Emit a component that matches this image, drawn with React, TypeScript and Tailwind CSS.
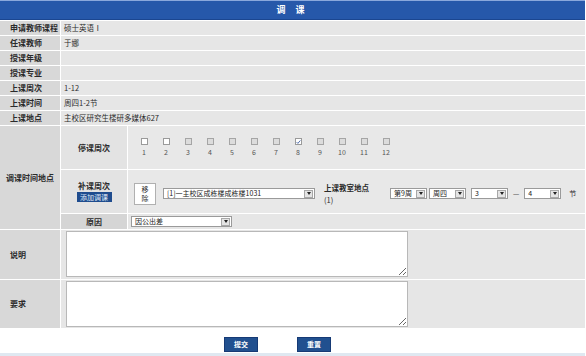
const weeks = [1, 2, 3, 4, 5, 6, 7, 8, 9, 10, 11, 12];

const infoRows: [string, string][] = [
  ["申请教师课程", "硕士英语Ⅰ"],
  ["任课教师", "于娜"],
  ["授课年级", ""],
  ["授课专业", ""],
  ["上课周次", "1-12"],
  ["上课时间", "周四1-2节"],
  ["上课地点", "主校区研究生楼研多媒体627"],
];

function Select({ text, className }: { text: string; className: string }) {
  return (
    <div className={`flex h-[11px] items-center justify-between border border-[#9a9a9a] bg-white pl-[3px] ${className}`}>
      <span className="whitespace-nowrap text-[7px] leading-[9px] text-[#222]">{text}</span>
      <span className="mr-px flex h-[8px] w-[9px] shrink-0 items-center justify-center border border-[#a8a8a8] bg-[#e4e4e4]">
        <span className="h-0 w-0 border-x-[2px] border-t-[3px] border-x-transparent border-t-[#222]" />
      </span>
    </div>
  );
}

function Checkbox({ state }: { state: "on" | "off" | "dim" }) {
  return (
    <span
      className={`flex h-[7px] w-[7px] items-center justify-center border ${
        state === "dim" ? "border-[#a5a5a5] bg-[#dcdcdc]" : "border-[#9a9a9a] bg-white"
      }`}
    >
      {state === "on" && (
        <svg viewBox="0 0 8 8" className="h-[6px] w-[6px]">
          <path d="M1 4.2 L3 6.2 L7 1.5" fill="none" stroke="#2a4f9a" strokeWidth="1.3" />
        </svg>
      )}
    </span>
  );
}

function Btn({ label }: { label: string }) {
  return (
    <div className="flex h-[15px] w-[34px] items-center justify-center border border-[#163a75] bg-[#21508f] text-[7px] font-bold text-white">
      {label}
    </div>
  );
}

export default function App() {
  return (
    <div className="h-[356px] w-[586px] overflow-hidden bg-white text-[#2b2b2b] [font-family:'Noto_Sans_CJK_SC','Liberation_Sans',sans-serif] [-webkit-font-smoothing:antialiased]">
      <div className="flex w-[585px] flex-col gap-px bg-white">
        <div className="flex h-[20px] items-center justify-center border-t border-t-[#8aa8dc] border-b border-b-[#1b4690] bg-[#2658aa] text-[9px] font-bold tracking-[4px] text-white">
          调 课
        </div>

        {infoRows.map(([label, value]) => (
          <div key={label} className="flex h-[14px] gap-px">
            <div className="flex w-[60px] items-center bg-[#d8d8d8] pl-[10px] text-[8px] font-bold leading-none">
              {label}
            </div>
            <div className="flex flex-1 items-center bg-[#e6e6e6] pl-[3px] text-[7.5px] leading-none">{value}</div>
          </div>
        ))}

        <div className="flex h-[103px] gap-px">
          <div className="flex w-[60px] items-center justify-center bg-[#d8d8d8] text-[8px] font-bold leading-none">
            调课时间地点
          </div>
          <div className="flex flex-1 flex-col gap-px">
            <div className="flex h-[43px] gap-px">
              <div className="flex w-[66px] items-center justify-center bg-[#e3e3e3] text-[8px] font-bold leading-none">
                停课周次
              </div>
              <div className="flex flex-1 bg-[#e8e8e8] pl-[5px] pt-[12px]">
                {weeks.map((w) => (
                  <div key={w} className="flex w-[22px] flex-col items-center gap-[4px]">
                    <Checkbox state={w === 8 ? "on" : w <= 2 ? "off" : "dim"} />
                    <span className="text-[7px] leading-none text-[#555]">{w}</span>
                  </div>
                ))}
              </div>
            </div>

            <div className="flex h-[43px] gap-px">
              <div className="flex w-[66px] flex-col items-center justify-center gap-[2px] bg-[#e3e3e3] pt-[1px]">
                <span className="text-[8px] font-bold leading-none">补课周次</span>
                <span className="flex h-[10px] w-[35px] items-center justify-center bg-[#1f4c8e] text-[7px] leading-none text-[#dfe8f7]">
                  添加调课
                </span>
              </div>
              <div className="flex flex-1 items-center bg-[#e8e8e8] pl-[6px] pt-[4px]">
                <div className="flex h-[22px] w-[22px] flex-col items-center justify-center border border-[#b0b0b0] bg-white text-[7px] leading-[9px]">
                  <span>移</span>
                  <span>除</span>
                </div>
                <Select text="[1]一主校区成栋楼成栋楼1031" className="ml-[7px] w-[152px]" />
                <div className="ml-[9px] flex w-[66px] flex-col gap-[4px] text-[7.5px] font-bold leading-none">
                  <span>上课教室地点</span>
                  <span className="font-normal">(1)</span>
                </div>
                <Select text="第9周" className="w-[37px]" />
                <Select text="周四" className="ml-[2px] w-[37px]" />
                <Select text="3" className="ml-[5px] w-[37px]" />
                <span className="ml-[5px] text-[7px] leading-none">—</span>
                <Select text="4" className="ml-[5px] w-[37px]" />
                <span className="ml-[8px] text-[7px] leading-none">节</span>
              </div>
            </div>

            <div className="flex h-[15px] gap-px">
              <div className="flex w-[66px] items-center justify-center bg-[#d5d5d5] text-[8px] font-bold leading-none">
                原因
              </div>
              <div className="flex flex-1 items-center bg-[#e6e6e6] pl-[3px]">
                <Select text="因公出差" className="w-[101px]" />
              </div>
            </div>
          </div>
        </div>

        {[
          ["说明", "h-[49px]"],
          ["要求", "h-[48px]"],
        ].map(([label, h]) => (
          <div key={label} className={`flex gap-px ${h}`}>
            <div className="flex w-[60px] items-center bg-[#d8d8d8] pl-[10px] text-[8px] font-bold leading-none">
              {label}
            </div>
            <div className="flex flex-1 items-start bg-[#e6e6e6] pl-[5px] pt-[1px]">
              <textarea
                readOnly
                className="h-[46px] w-[342px] border border-[#b8b8b8] bg-white outline-none"
              />
            </div>
          </div>
        ))}

        <div className="flex h-[23px] items-end gap-[39px] pl-[224px]">
          <Btn label="提交" />
          <Btn label="重置" />
        </div>
      </div>
      <div className="mt-[1px] h-[4px] w-[585px] bg-[#dfe8f1]" />
    </div>
  );
}
